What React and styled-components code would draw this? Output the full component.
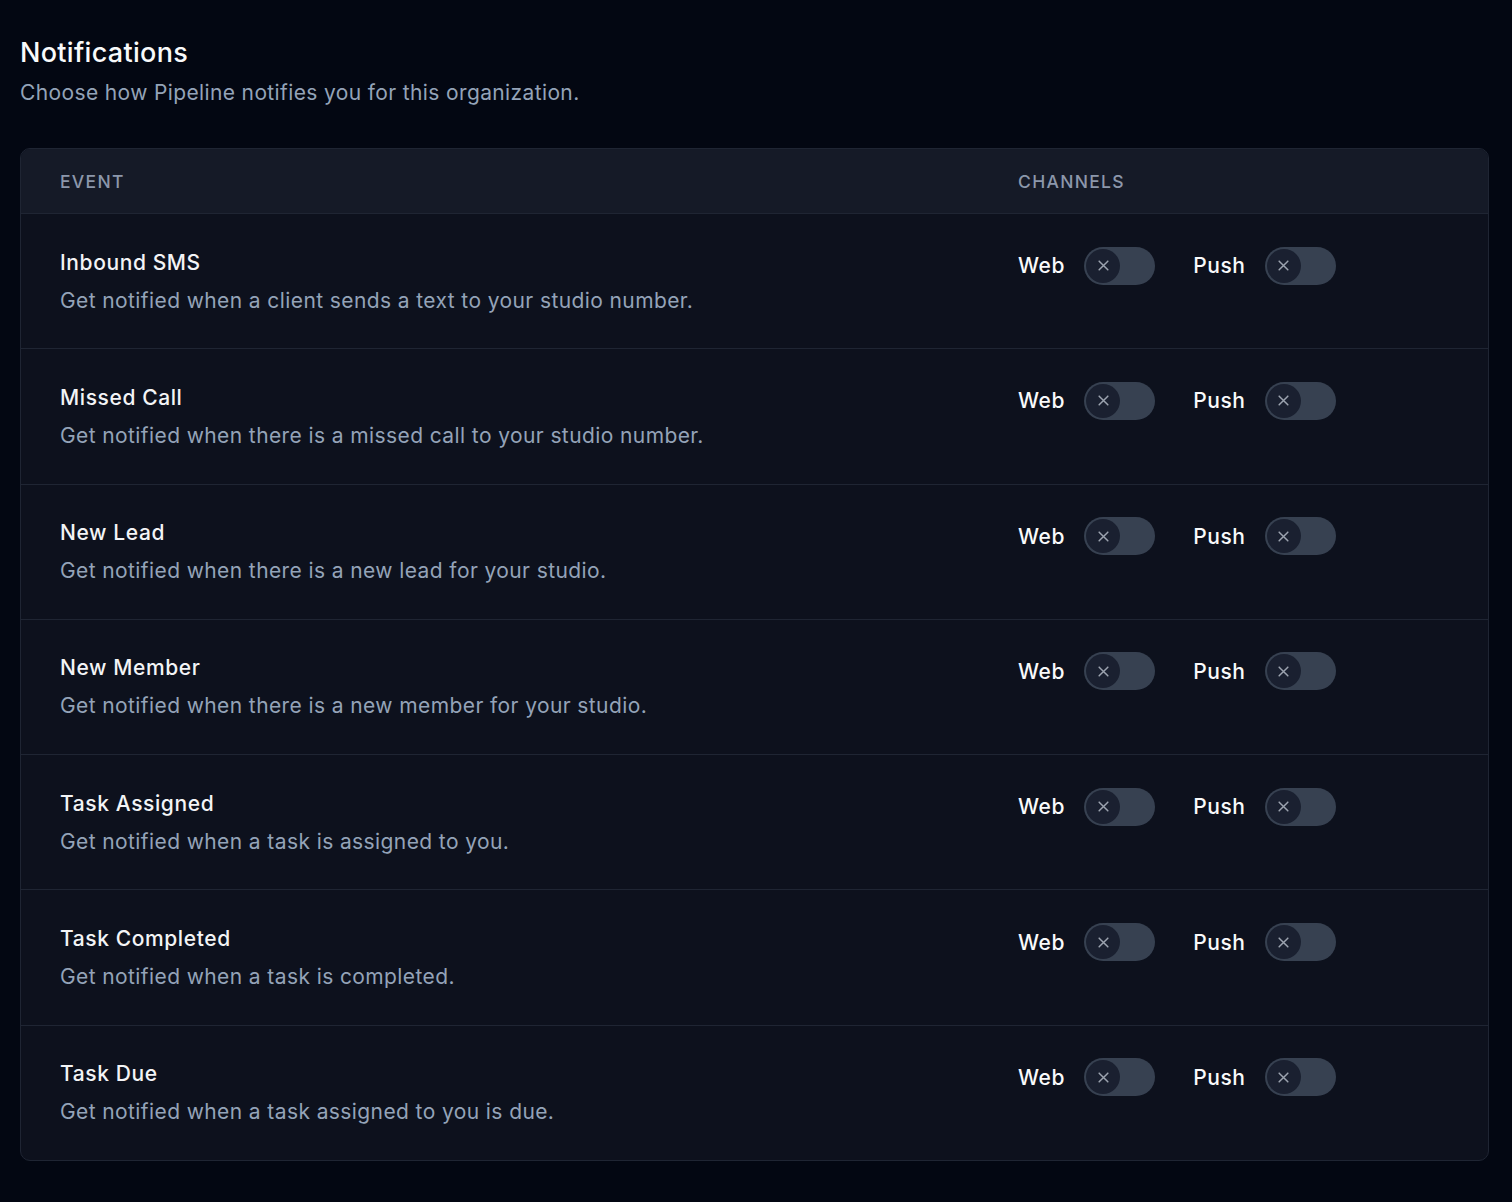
import React from "react";
import styled, { createGlobalStyle } from "styled-components";

const GlobalStyle = createGlobalStyle`
  html, body {
    margin: 0;
    background: #030712;
    font-family: Inter, "Noto Sans", sans-serif;
    -webkit-font-smoothing: antialiased;
  }
`;

const Page = styled.div`
  padding: 35px 23px 40px 20px;
`;

const Title = styled.h1`
  margin: 0;
  font-size: 27px;
  line-height: 36px;
  font-weight: 500;
  letter-spacing: 0.3px;
  color: #f9fafb;
`;

const Subtitle = styled.p`
  margin: 7px 0 40px;
  font-size: 21px;
  line-height: 30px;
  letter-spacing: 0.37px;
  color: #94a3b8;
`;

const Card = styled.div`
  border: 1px solid #1f2533;
  border-radius: 10px;
  background: #0d111d;
  overflow: hidden;
`;

const Row = styled.div`
  display: grid;
  grid-template-columns: 1fr 430px;
  padding: 0 40px 0 39px;
  border-top: 1px solid #1f2533;
  &:first-child {
    border-top: none;
  }
`;

const HeadRow = styled(Row)`
  background: #151a27;
  height: 64px;
  align-items: center;
`;

const HeadCell = styled.div`
  font-size: 17.5px;
  font-weight: 500;
  letter-spacing: 1.3px;
  text-transform: uppercase;
  color: #8c97ab;
`;

const EventRow = styled(Row)`
  padding-top: 33.6px;
  padding-bottom: 32.7px;
`;

const EventName = styled.div`
  font-size: 21px;
  line-height: 30px;
  font-weight: 500;
  letter-spacing: 0.6px;
  color: #f3f4f6;
`;

const EventDesc = styled.div`
  margin-top: 8px;
  font-size: 21px;
  line-height: 30px;
  letter-spacing: 0.4px;
  color: #94a3b8;
`;

const Channels = styled.div`
  display: flex;
  align-items: center;
  gap: 38px;
  height: 38px;
  margin-top: -1px;
`;

const Channel = styled.label`
  display: flex;
  align-items: center;
  gap: 19px;
  font-size: 21px;
  font-weight: 500;
  letter-spacing: 0.6px;
  color: #f9fafb;
  cursor: pointer;
`;

const Track = styled.span`
  display: inline-flex;
  align-items: center;
  width: 71px;
  height: 38px;
  border-radius: 19px;
  background: ${(p) => (p.$on ? "#4f46e5" : "#374151")};
  padding: 2px;
  box-sizing: border-box;
`;

const Knob = styled.span`
  width: 34px;
  height: 34px;
  border-radius: 50%;
  background: #1a2030;
  display: flex;
  align-items: center;
  justify-content: center;
  transform: translateX(${(p) => (p.$on ? "33px" : "0")});
`;

const events = [
  ["Inbound SMS", "Get notified when a client sends a text to your studio number."],
  ["Missed Call", "Get notified when there is a missed call to your studio number."],
  ["New Lead", "Get notified when there is a new lead for your studio."],
  ["New Member", "Get notified when there is a new member for your studio."],
  ["Task Assigned", "Get notified when a task is assigned to you."],
  ["Task Completed", "Get notified when a task is completed."],
  ["Task Due", "Get notified when a task assigned to you is due."],
];

function Toggle({ on }) {
  return (
    <Track $on={on}>
      <Knob $on={on}>
        <svg width="13" height="13" viewBox="0 0 12 12" fill="none">
          <path d="M2 2l8 8M10 2l-8 8" stroke="#9ca3af" strokeWidth="1.4" strokeLinecap="round" />
        </svg>
      </Knob>
    </Track>
  );
}

export default function App() {
  return (
    <Page>
      <GlobalStyle />
      <Title>Notifications</Title>
      <Subtitle>Choose how Pipeline notifies you for this organization.</Subtitle>
      <Card>
        <HeadRow>
          <HeadCell>Event</HeadCell>
          <HeadCell>Channels</HeadCell>
        </HeadRow>
        {events.map(([name, desc]) => (
          <EventRow key={name}>
            <div>
              <EventName>{name}</EventName>
              <EventDesc>{desc}</EventDesc>
            </div>
            <Channels>
              <Channel>
                Web
                <Toggle on={false} />
              </Channel>
              <Channel>
                Push
                <Toggle on={false} />
              </Channel>
            </Channels>
          </EventRow>
        ))}
      </Card>
    </Page>
  );
}
